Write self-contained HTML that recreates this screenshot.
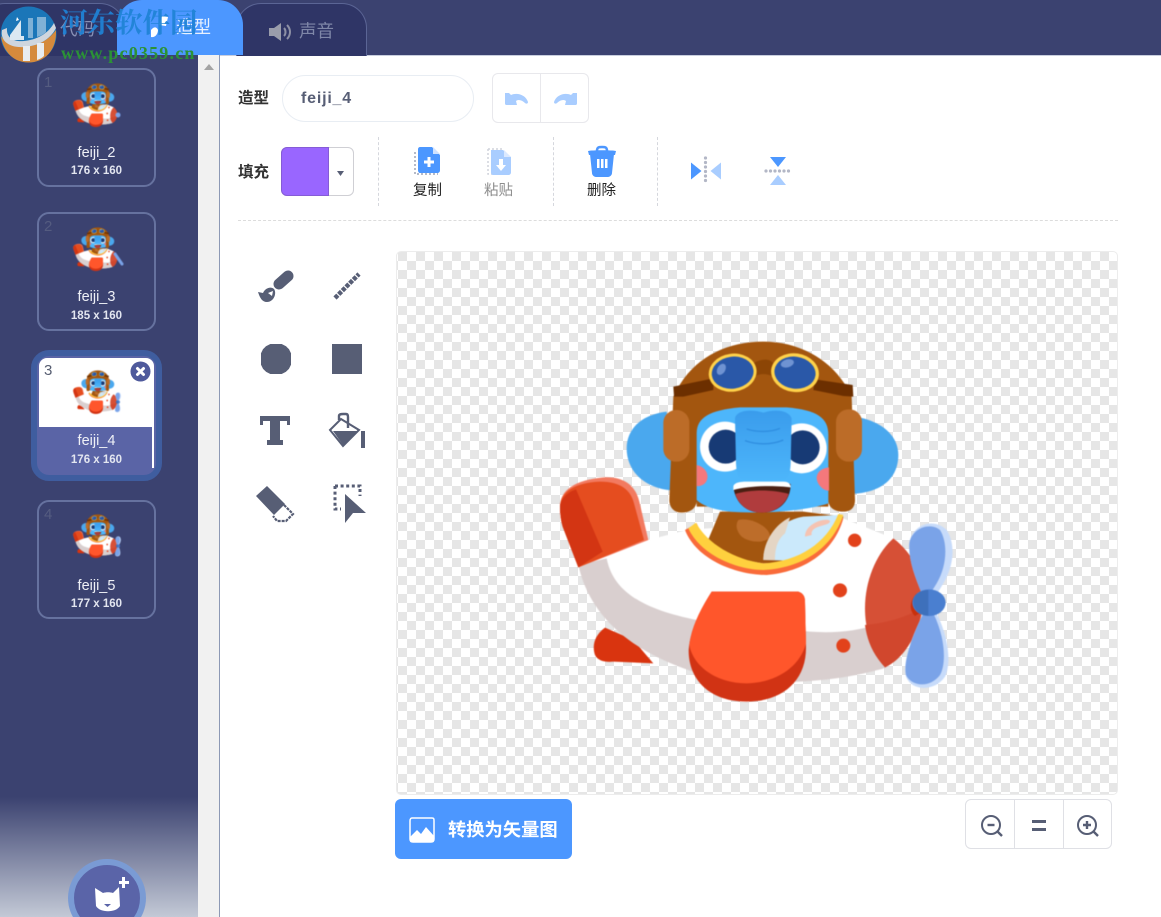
<!DOCTYPE html>
<html lang="zh"><head><meta charset="utf-8"><title>造型</title>
<style>
html,body{margin:0;padding:0;width:1161px;height:917px;overflow:hidden;background:#fff;font-family:"Liberation Sans","Noto Sans CJK SC",sans-serif}
#root{position:absolute;left:0;top:0;width:1161px;height:917px;overflow:hidden;background:#fff}
.a{position:absolute;box-sizing:border-box}
.t{position:absolute;white-space:nowrap;line-height:1}
.card{position:absolute;box-sizing:border-box;left:37px;width:119px;height:119px;border:2px solid #66729f;border-radius:12px}
.num{position:absolute;left:44px;font-size:15px;color:#555c80;line-height:1}
.nm{position:absolute;left:37px;width:119px;text-align:center;color:#eef0f6;font-size:14.5px;line-height:1}
.sz{position:absolute;left:37px;width:119px;text-align:center;color:#e3e6f0;font-size:11.5px;font-weight:bold;line-height:1}
.lab{position:absolute;font-size:15.5px;font-weight:bold;color:#333;line-height:1;white-space:nowrap}
.act{position:absolute;font-size:14.5px;line-height:1;white-space:nowrap;color:#222}
svg{position:absolute;overflow:visible}
.v{position:absolute;width:0;border-left:1px dashed #d5d7dd}
.th{filter:blur(.6px)}
.main{filter:blur(.5px)}
</style></head><body>
<div id="root">

<svg width="0" height="0" style="left:0;top:0"><defs>
<linearGradient id="tr" x1="0" y1="0" x2="0" y2="1"><stop offset="0" stop-color="#3a9cec"/><stop offset="1" stop-color="#4db6fb"/></linearGradient>
<symbol id="ch" viewBox="0 0 1260 1140" overflow="visible">
 <path d="M350 245C270 255 230 300 230 355C230 420 280 480 380 482Z M880 255C1000 265 1045 320 1045 375C1045 440 1000 495 880 492Z" fill="#4aa8ee"/>
 <path d="M165 893C135 915 125 945 135 975C145 995 170 997 190 995L310 1000L250 930Z" fill="#d9340f"/>
 <path d="M90 700C130 860 240 950 420 1020C600 1070 850 1060 1000 1012L1110 800L1030 625L880 565L410 600L295 630Z" fill="#fff"/>
 <path d="M85 705L170 685C190 790 290 840 440 870L780 905C850 910 920 905 990 880L1010 1012C850 1062 600 1075 420 1022C240 960 120 860 85 705Z" fill="#d9cfcf"/>
 <path d="M1030 625C1090 670 1120 740 1120 800C1120 880 1080 970 1005 1012C965 960 945 900 945 835C945 750 980 670 1030 625Z" fill="#d65036"/>
 <path d="M945 885C1010 880 1070 860 1115 835C1105 910 1065 985 1005 1012C970 975 952 935 945 885Z" fill="#d1472d"/>
 <path d="M30 530C30 480 75 450 160 442C225 438 258 470 268 515L295 630L85 712L38 590C32 570 30 550 30 530Z" fill="#f27a60"/>
 <path d="M30 530C32 485 75 458 150 455C212 455 242 480 252 520L282 630L85 712L38 590C32 570 30 550 30 530Z" fill="#e54d1f"/>
 <path d="M30 530C32 505 55 485 78 478L158 665L85 712L38 590C32 570 30 550 30 530Z" fill="#d33513"/>
 <path d="M470 640L510 545L760 545L880 560C860 650 790 700 640 700C570 690 510 670 470 640Z" fill="#a3560f"/>
 <path d="M565 570C600 560 660 590 660 620C650 640 600 640 575 620C560 605 555 585 565 570Z" fill="#bd6d2a"/>
 <path d="M640 690C640 620 700 570 760 560L865 555C860 620 800 680 720 692Z" fill="#cbe9fb"/>
 <path d="M640 690C640 630 680 580 720 562L705 610C680 630 675 660 675 690Z" fill="#e4d5c4"/>
 <path d="M765 620C765 575 840 560 840 575C835 590 780 585 785 615Z" fill="#f5c3b2"/>
 <path d="M405 600C440 690 560 735 650 735C760 725 850 670 880 565L865 555C830 650 750 700 640 700C540 690 470 650 440 580Z" fill="#f96b3a"/>
 <path d="M415 595C450 670 550 718 640 720C750 715 845 660 880 555L865 552C830 640 745 695 640 700C555 690 470 640 438 578Z" fill="#ffd03e"/>
 <circle cx="914" cy="631" r="20" fill="#e2421b"/><circle cx="870" cy="781" r="21" fill="#e2421b"/><circle cx="880" cy="947" r="21" fill="#e2421b"/>
 <path d="M485 785H745C760 790 765 800 765 815L768 950C770 1050 700 1115 590 1115C480 1115 415 1050 416 960C420 900 450 840 485 785Z" fill="#d13314"/>
 <path d="M485 785H745C760 790 765 800 765 815L768 940C750 1010 680 1058 590 1060C500 1060 430 1010 418 945C425 890 450 840 485 785Z" fill="#ff562b"/>
 <path d="M370 200C420 90 520 35 640 35C760 35 860 100 905 200L915 510C915 535 900 545 880 545C850 545 835 530 835 510V530H440V515C438 535 420 548 395 548C370 548 358 530 358 510Z" fill="#a3560f"/>
 <path d="M440 310C440 262 480 240 570 232L710 232C800 240 835 262 835 315V520C760 545 620 552 540 545C500 540 460 530 440 510Z" fill="#4db6fb"/>
 <path d="M440 405C465 410 475 430 472 445C470 460 455 470 440 468Z M837 412C810 415 800 430 800 445C802 465 820 482 837 482Z" fill="#f4787c"/>
 <circle cx="525" cy="350" r="75" fill="#fff"/><circle cx="755" cy="355" r="75" fill="#fff"/>
 <circle cx="527" cy="350" r="51" fill="#173a75"/><circle cx="758" cy="352" r="51" fill="#173a75"/>
 <path d="M555 265C560 238 610 238 640 248C670 238 715 238 725 265L722 400C720 435 715 450 695 452H585C565 450 560 435 558 400Z" fill="url(#tr)"/>
 <path d="M590 297C620 307 660 307 690 295M585 332C620 345 665 345 700 330" stroke="#2f8ee0" stroke-width="4" fill="none"/>
 <path d="M550 470C600 455 680 455 722 462C722 510 690 548 635 548C585 548 555 515 550 470Z" fill="#4a1f12"/>
 <path d="M556 492C600 478 670 478 716 492C705 525 675 548 635 548C595 548 565 525 556 492Z" fill="#b03c3d"/>
 <path d="M550 470C552 458 570 455 590 455H700C715 455 722 462 722 472C680 466 600 466 550 480Z" fill="#fff"/>
 <rect x="340" y="240" width="78" height="155" rx="38" fill="#bc6c28"/><rect x="858" y="238" width="78" height="157" rx="38" fill="#bc6c28"/>
 <path d="M370 170L490 145L490 180L400 200H372Z M795 148L908 165L910 200L880 198L790 180Z" fill="#6c2f00"/>
 <path d="M610 100C635 85 660 85 670 100L670 140C650 130 630 130 612 140Z" fill="#8c4505"/>
 <ellipse cx="548" cy="128" rx="72" ry="57" fill="#ffd24a" transform="rotate(-8 548 128)"/><ellipse cx="548" cy="128" rx="63" ry="48" fill="#2a58a8" transform="rotate(-8 548 128)"/>
 <ellipse cx="735" cy="128" rx="72" ry="58" fill="#ffd24a" transform="rotate(8 735 128)"/><ellipse cx="735" cy="128" rx="62" ry="48" fill="#2a58a8" transform="rotate(8 735 128)"/>
 <ellipse cx="514" cy="118" rx="12" ry="18" fill="#6f93d2" transform="rotate(30 514 118)"/><ellipse cx="712" cy="100" rx="20" ry="12" fill="#6f93d2" transform="rotate(-15 712 100)"/>
</symbol>
<symbol id="pr" viewBox="0 0 1260 1140" overflow="visible">
 <path d="M1078 640C1085 585 1150 560 1190 600C1215 640 1215 700 1180 760L1150 810L1115 790C1095 740 1075 690 1078 640Z M1120 850L1160 850C1195 920 1205 1000 1185 1040C1155 1085 1085 1085 1068 1040C1055 990 1095 900 1120 850Z" fill="#c7dbfa"/>
 <path d="M1078 640C1085 595 1140 575 1170 600C1195 640 1190 710 1160 760L1135 800L1115 790C1095 740 1075 690 1078 640Z M1120 850L1150 850C1185 920 1190 1000 1170 1035C1140 1075 1085 1070 1068 1035C1058 990 1095 900 1120 850Z" fill="#7aa3e8"/>
 <path d="M1100 790C1080 810 1075 840 1095 858L1125 840Z" fill="#c9300c"/>
 <ellipse cx="1137" cy="818" rx="50" ry="40" fill="#4a7fd0"/><path d="M1090 815C1090 795 1110 780 1135 780L1135 857C1110 857 1090 840 1090 815Z" fill="#3e70bb"/>
</symbol>
</defs></svg>

<!-- dark frame -->
<div class="a" style="left:0;top:0;width:1161px;height:55px;background:#3b4270"></div>
<div class="a" style="left:0;top:55px;width:198px;height:862px;background:linear-gradient(#3b4270 0,#3b4270 742px,#c3c9d6 862px)"></div>
<div class="a" style="left:198px;top:55px;width:22px;height:862px;background:#f1f1f1;border-right:1px solid #8d99b5"></div>
<div class="a" style="left:220px;top:55px;width:941px;height:1px;background:#c8cede"></div>
<svg style="left:204px;top:64px" width="10" height="6"><path d="M0 6L5 0L10 6Z" fill="#a3a3a3"/></svg>

<!-- tabs -->
<div class="a" style="left:-20px;top:3px;width:145px;height:53px;background:#2f3566;border:1px solid #5b6595;border-bottom:0;border-radius:25px 25px 0 0"></div>
<div class="a" style="left:236px;top:3px;width:131px;height:53px;background:#2f3566;border:1px solid #5b6595;border-bottom:0;border-radius:25px 25px 0 0"></div>
<div class="a" style="left:117px;top:0;width:126px;height:55px;background:#4c97ff;border-radius:25px 25px 0 0"></div>
<div class="t" style="left:60px;top:21px;font-size:17.5px;color:#8890b5">代码</div>
<div class="t" style="left:176px;top:19px;font-size:17.5px;color:#e8f1ff">造型</div>
<div class="t" style="left:299px;top:23px;font-size:17.5px;color:#7f87a8">声音</div>
<svg style="left:268px;top:23px" width="24" height="18" viewBox="0 0 24 18"><path d="M1 5H6L13 0V18L6 13H1Z" fill="#9a9dab"/><path d="M16 5C18 7 18 11 16 13M19 2C23 6 23 12 19 16" stroke="#8d90a5" stroke-width="2" fill="none"/></svg>
<svg style="left:148px;top:14px" width="26" height="26" viewBox="0 0 26 26"><path d="M14 2L20 3L18 12L11 11Z M3 16C6 12 9 13 10 16C10 20 7 24 3 23Z" fill="#fff"/></svg>

<!-- watermark -->
<svg style="left:0;top:6px" width="57" height="57" viewBox="0 0 57 57">
 <circle cx="28.5" cy="28.5" r="28" fill="#1b76b8"/>
 <path d="M1 30C10 44 40 46 56 24C57 45 44 56.500 28.500 56.500C14 56.500 3 46 1 30Z" fill="#d58a3c"/>
 <path d="M2 24C0 34 8 42 24 41C38 40 50 34 56 22L54 17C48 28 36 34 24 35C14 36 6 32 7 22Z" fill="#cfd6de"/>
 <path d="M10 29L21 14V30H24V34H10Z" fill="#dbe8f2"/>
 <path d="M28 12H33V32H28Z M37 11H46V26C43 29 40 30 37 31Z" fill="#7fb1d6"/>
 <path d="M23 40H30V55H23Z M37 37H44V50C42 52 40 53 37 54Z" fill="#e8ecf0"/>
 <path d="M17 11L19 14L16 15Z" fill="#fff"/>
</svg>
<div class="t" style="left:60px;top:9px;font-family:'Liberation Serif','Noto Serif CJK SC',serif;font-weight:bold;font-size:27.5px;color:#1f83d6;opacity:.93">河东软件园</div>
<div class="t" style="left:61px;top:44px;font-family:'Liberation Serif',serif;font-weight:bold;font-size:18px;letter-spacing:1.2px;color:#2b9236">www.pc0359.cn</div>

<!-- cards -->
<div class="card" style="top:68px"></div>
<div class="num" style="top:75px">1</div>
<svg class="th" style="left:71.8px;top:81.500px" width="51" height="46"><use href="#ch" width="51" height="46"/><circle cx="46" cy="33" r="2.5" fill="#7aa3e8"/></svg>
<div class="nm" style="top:146px">feiji_2</div><div class="sz" style="top:166px">176 x 160</div>

<div class="card" style="top:212px"></div>
<div class="num" style="top:219px">2</div>
<svg class="th" style="left:71.8px;top:225.500px" width="51" height="46"><use href="#ch" width="51" height="46"/><path d="M43 28L50 38" stroke="#7aa3e8" stroke-width="3" stroke-linecap="round"/></svg>
<div class="nm" style="top:290px">feiji_3</div><div class="sz" style="top:311px">185 x 160</div>

<div class="a" style="left:31px;top:350px;width:131px;height:131px;background:#5a64a6;border:6px solid #3f5d9f;border-radius:18px"></div>
<div class="a" style="left:39px;top:358px;width:115px;height:69px;background:#fff;border-radius:8px 8px 0 0"></div>
<div class="a" style="left:152px;top:427px;width:2px;height:41px;background:#fff"></div>
<div class="num" style="top:363px;color:#555c70">3</div>
<svg class="th" style="left:71.8px;top:369px" width="51" height="46"><use href="#ch" width="51" height="46"/><use href="#pr" width="51" height="46"/></svg>
<svg style="left:130px;top:361px" width="21" height="21" viewBox="0 0 21 21"><circle cx="10.500" cy="10.500" r="10" fill="#4f5a9c"/><path d="M7.500 7.500L13.500 13.500M13.500 7.500L7.500 13.500" stroke="#fff" stroke-width="3" stroke-linecap="round"/></svg>
<div class="nm" style="top:434px">feiji_4</div><div class="sz" style="top:455px">176 x 160</div>

<div class="card" style="top:500px"></div>
<div class="num" style="top:507px">4</div>
<svg class="th" style="left:71.8px;top:513px" width="51" height="46"><use href="#ch" width="51" height="46"/><use href="#pr" width="51" height="46"/></svg>
<div class="nm" style="top:579px">feiji_5</div><div class="sz" style="top:599px">177 x 160</div>

<!-- add button -->
<div class="a" style="left:68px;top:859px;width:78px;height:78px;border-radius:50%;background:#5a64a8;border:6px solid #7a9bd4"></div>
<svg style="left:92px;top:876px" width="40" height="40" viewBox="0 0 40 40"><path d="M3 12L11 17C14 16 18 16 21 17L27 11L28 30C24 37 8 37 4 30Z" fill="#fff"/><path d="M12 28H19L15.500 31Z" fill="#5a64a8"/><path d="M27 5H30V1H33V5H37V8H33V12H30V8H27Z" fill="#fff"/></svg>

<!-- top row -->
<div class="lab" style="left:238px;top:91px">造型</div>
<div class="a" style="left:282px;top:75px;width:192px;height:47px;border:1px solid #e8edf3;border-radius:24px"></div>
<div class="t" style="left:301px;top:91px;font-size:16px;font-weight:bold;color:#575e75;letter-spacing:.8px">feiji_4</div>
<div class="a" style="left:492px;top:73px;width:97px;height:50px;border:1px solid #e8e8ec;border-radius:6px"></div>
<div class="a" style="left:540px;top:74px;width:1px;height:48px;background:#e8e8ec"></div>
<svg style="left:505px;top:92px" width="24" height="14" viewBox="0 0 24 14"><path d="M0 1H4L6 3C12 0 21 3 23 10C23 12 21 12 20 11C17 8 13 7 11 9L12 13H2C0 13 0 12 0 11Z" fill="#a9cdff"/></svg>
<svg style="left:553px;top:92px" width="24" height="14" viewBox="0 0 24 14"><path d="M24 1H20L18 3C12 0 3 3 1 10C1 12 3 12 4 11C7 8 11 7 13 9L12 13H22C24 13 24 12 24 11Z" fill="#a9cdff"/></svg>

<!-- fill row -->
<div class="lab" style="left:238px;top:165px">填充</div>
<div class="a" style="left:281px;top:147px;width:73px;height:49px;border:1px solid #cfcfd4;border-radius:6px;background:#fff"></div>
<div class="a" style="left:281px;top:147px;width:48px;height:49px;background:#9966ff;border:1px solid #855cd6;border-radius:6px 0 0 6px"></div>
<svg style="left:337px;top:171px" width="7" height="5"><path d="M0 0H7L3.500 5Z" fill="#575e75"/></svg>
<div class="v" style="left:378px;top:137px;height:69px"></div>
<div class="v" style="left:553px;top:137px;height:69px"></div>
<div class="v" style="left:657px;top:137px;height:69px"></div>

<svg style="left:414px;top:146px" width="28" height="30" viewBox="0 0 28 30"><path d="M1 6V28H24" fill="none" stroke="#b5bac8" stroke-width="2" stroke-dasharray="2 2"/><path d="M6 1H18L26 9V24C26 26 25 27 23 27H6C5 27 4 26 4 24V3C4 2 5 1 6 1Z" fill="#4c97ff"/><path d="M19 1L26 8H19Z" fill="#cfe2ff"/><path d="M10 16H20M15 11V21" stroke="#fff" stroke-width="3"/></svg>
<div class="act" style="left:413px;top:184px">复制</div>
<svg style="left:487px;top:147px" width="26" height="30" viewBox="0 0 26 30"><path d="M1 2H16M1 2V27H5" fill="none" stroke="#d0d3dc" stroke-width="1.5" stroke-dasharray="2 2"/><path d="M4 3H16L24 10V25C24 27 23 28 21 28H6C5 28 4 27 4 25Z" fill="#a9cdff"/><path d="M17 3L24 10H17Z" fill="#dbe9ff"/><path d="M12 12H16V18H19L14 24L9 18H12Z" fill="#fff"/></svg>
<div class="act" style="left:484px;top:184px;color:#8c8c8c">粘贴</div>
<svg style="left:588px;top:146px" width="28" height="31" viewBox="0 0 28 31"><path d="M9 5C9 1 11 1 14 1C17 1 19 1 19 5" fill="none" stroke="#4c97ff" stroke-width="2.500"/><path d="M0 5C4 4 24 4 28 5L27 9H1Z" fill="#4c97ff"/><path d="M2 8H26L24 27C24 29 22 31 20 31H8C6 31 4 29 4 27Z" fill="#4c97ff"/><path d="M9 13H11.500V22H9Z M13 13H15.500V22H13Z M17 13H19.500V22H17Z" fill="#fff"/></svg>
<div class="act" style="left:587px;top:184px">删除</div>

<svg style="left:691px;top:157px" width="30" height="28" viewBox="0 0 30 28"><path d="M0 5.500L10.500 14L0 22.500Z" fill="#4c97ff"/><path d="M30 5.500L19.500 14L30 22.500Z" fill="#a9cdff"/><path d="M14.500 1V28" stroke="#b3b7c6" stroke-width="3.200" stroke-linecap="round" stroke-dasharray="0 4.500"/></svg>
<svg style="left:765px;top:157px" width="26" height="28" viewBox="0 0 26 28"><path d="M5 0H21L13 10Z" fill="#4c97ff"/><path d="M5 28H21L13 18Z" fill="#a9cdff"/><path d="M1 14H26" stroke="#b3b7c6" stroke-width="3.200" stroke-linecap="round" stroke-dasharray="0 4.500"/></svg>

<div class="a" style="left:238px;top:220px;width:880px;border-top:1px dashed #dcdcdc"></div>

<!-- tools -->
<svg style="left:257px;top:270px" width="38" height="34" viewBox="0 0 38 34" fill="#575e75"><path d="M22 14L31 6" stroke="#575e75" stroke-width="11" stroke-linecap="round"/><path d="M1 22L6 23C8 18 14 16 17 19C20 23 17 32 10 32C5 32 3 28 1 22Z"/><path d="M11 23L16 21L15 26Z" fill="#fff"/></svg>
<svg style="left:333px;top:272px" width="29" height="30" viewBox="0 0 29 30"><path d="M2 26L26 2" stroke="#575e75" stroke-width="4.500" stroke-dasharray="4 1.200"/></svg>
<svg style="left:260.500px;top:344px" width="30" height="30" viewBox="0 0 29 29"><path d="M9 0H20L24 2L27 5L29 9V20L27 24L24 27L20 29H9L5 27L2 24L0 20V9L2 5L5 2Z" fill="#575e75"/></svg>
<div class="a" style="left:332px;top:344px;width:30px;height:30px;background:#575e75"></div>
<svg style="left:260px;top:416px" width="30" height="30" viewBox="0 0 30 30"><path d="M0 0H30V9H27V5H20V24H23V29H7V24H10V5H3V9H0Z" fill="#575e75"/></svg>
<svg style="left:328px;top:413px" width="38" height="35" viewBox="0 0 38 35"><path d="M2 17L13 6L31 17L15 33Z" fill="none" stroke="#575e75" stroke-width="2"/><path d="M5 18L29 18L15 32Z" fill="#575e75"/><path d="M11 7V3C11 1 13 1 15 1H18C20 1 20 3 20 4V15" fill="none" stroke="#575e75" stroke-width="2.400"/><path d="M33 18H37V35H33Z" fill="#575e75"/></svg>
<svg style="left:256px;top:485px" width="38" height="38" viewBox="0 0 38 38"><path d="M11 1L29 19L18 30L0 11Z" fill="#575e75"/><path d="M28 20L37 29L30 36H21L17 31" fill="none" stroke="#575e75" stroke-width="2.200" stroke-dasharray="3 1"/></svg>
<svg style="left:333px;top:484px" width="35" height="40" viewBox="0 0 35 40"><path d="M2 2H27V12M2 2V25H8" fill="none" stroke="#575e75" stroke-width="3" stroke-dasharray="3 2.600"/><path d="M12 10L33 29L20 29L12 39Z" fill="#575e75"/></svg>

<!-- canvas -->
<div class="a" style="left:396px;top:251px;width:722px;height:544px;border:1px solid #ececec;border-radius:5px;background-color:#fff;background-image:conic-gradient(#fff 25%,#e6e6e6 0 50%,#fff 0 75%,#e6e6e6 0);background-size:18px 18px;background-position:1px 0"></div>
<svg class="main" style="left:550px;top:330px" width="420" height="380"><use href="#ch" width="420" height="380"/><use href="#pr" width="420" height="380"/></svg>

<!-- bottom -->
<div class="a" style="left:395px;top:799px;width:177px;height:60px;background:#4c97ff;border-radius:6px"></div>
<svg style="left:409px;top:817px" width="26" height="26" viewBox="0 0 26 26"><path d="M3 1H23C25 1 25 2 25 4V22C25 24 24 25 22 25H4C2 25 1 24 1 22V4C1 2 2 1 3 1Z" fill="none" stroke="#fff" stroke-width="1.500"/><path d="M1 20L8 13L12 17L17 10L25 19V23C25 25 24 25 22 25H4C2 25 1 25 1 23Z" fill="#fff"/></svg>
<div class="t" style="left:448px;top:821px;font-size:18.300px;font-weight:bold;color:#fff">转换为矢量图</div>

<div class="a" style="left:965px;top:799px;width:147px;height:50px;border:1px solid #dfe0e5;border-radius:6px"></div>
<div class="a" style="left:1014px;top:800px;width:1px;height:48px;background:#dfe0e5"></div>
<div class="a" style="left:1063px;top:800px;width:1px;height:48px;background:#dfe0e5"></div>
<svg style="left:980px;top:814px" width="24" height="24" viewBox="0 0 24 24"><circle cx="11" cy="11" r="9" fill="none" stroke="#575e75" stroke-width="2"/><path d="M17 17L22 22" stroke="#575e75" stroke-width="2.400"/><path d="M7.500 11H14.500" stroke="#575e75" stroke-width="2.400"/></svg>
<svg style="left:1032px;top:820px" width="14" height="12"><path d="M0 1.500H14M0 9.500H14" stroke="#575e75" stroke-width="3"/></svg>
<svg style="left:1076px;top:814px" width="24" height="24" viewBox="0 0 24 24"><circle cx="11" cy="11" r="9" fill="none" stroke="#575e75" stroke-width="2"/><path d="M17 17L22 22" stroke="#575e75" stroke-width="2.400"/><path d="M7 11H15M11 7V15" stroke="#575e75" stroke-width="2.400"/></svg>
</div>
</body></html>
